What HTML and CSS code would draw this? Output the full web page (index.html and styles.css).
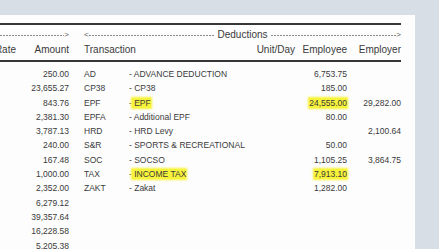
FILE: index.html
```html
<!DOCTYPE html>
<html>
<head>
<meta charset="utf-8">
<link rel="stylesheet" href="styles.css">
</head>
<body>
<div class="page">
  <div class="report">
    <div class="head">
      <div class="dashrow">
        <div class="seg-left"><span class="dash"></span><span class="arr">&gt;</span></div>
        <div class="seg-right"><span class="arr">&lt;</span><span class="dash"></span><span class="title">Deductions</span><span class="dash"></span><span class="arr">&gt;</span></div>
      </div>
      <div class="grid hdr">
        <span class="rate"><span>Rate</span></span><span class="r">Amount</span><span></span><span class="l span2">Transaction</span><span class="r">Unit/Day</span><span class="r">Employee</span><span class="r">Employer</span>
      </div>
    </div>
    <div class="body">
      <div class="grid row"><span></span><span class="r">250.00</span><span></span><span>AD</span><span>- ADVANCE DEDUCTION</span><span></span><span class="r">6,753.75</span><span></span></div>
      <div class="grid row"><span></span><span class="r">23,655.27</span><span></span><span>CP38</span><span>- CP38</span><span></span><span class="r">185.00</span><span></span></div>
      <div class="grid row"><span></span><span class="r">843.76</span><span></span><span>EPF</span><span>-<span class="hl"> EPF</span></span><span></span><span class="r"><span class="hl">24,555.00</span></span><span class="r">29,282.00</span></div>
      <div class="grid row"><span></span><span class="r">2,381.30</span><span></span><span>EPFA</span><span>- Additional EPF</span><span></span><span class="r">80.00</span><span></span></div>
      <div class="grid row"><span></span><span class="r">3,787.13</span><span></span><span>HRD</span><span>- HRD Levy</span><span></span><span></span><span class="r">2,100.64</span></div>
      <div class="grid row"><span></span><span class="r">240.00</span><span></span><span>S&amp;R</span><span>- SPORTS &amp; RECREATIONAL</span><span></span><span class="r">50.00</span><span></span></div>
      <div class="grid row"><span></span><span class="r">167.48</span><span></span><span>SOC</span><span>- SOCSO</span><span></span><span class="r">1,105.25</span><span class="r">3,864.75</span></div>
      <div class="grid row"><span></span><span class="r">1,000.00</span><span></span><span>TAX</span><span>-<span class="hl"> INCOME TAX</span></span><span></span><span class="r"><span class="hl">7,913.10</span></span><span></span></div>
      <div class="grid row"><span></span><span class="r">2,352.00</span><span></span><span>ZAKT</span><span>- Zakat</span><span></span><span class="r">1,282.00</span><span></span></div>
      <div class="grid row"><span></span><span class="r">6,279.12</span></div>
      <div class="grid row"><span></span><span class="r">39,357.64</span></div>
      <div class="grid row"><span></span><span class="r">16,228.58</span></div>
      <div class="grid row"><span></span><span class="r">5,205.38</span></div>
    </div>
  </div>
</div>
</body>
</html>
```
FILE: styles.css
```css
html, body {
  margin: 0;
  padding: 0;
  background: #d8dee6;
  height: 100%;
  overflow: hidden;
}
body {
  font-family: "Liberation Sans", Arial, sans-serif;
  color: #3a3a3a;
}
.page {
  margin-top: 15px;
  width: 415px;
  height: 240px;
  background: #fdfdfd;
  padding-top: 8px;
  box-sizing: border-box;
}
.report {
  width: 401px;
}
.head {
  border-top: 2px solid #363636;
  border-bottom: 2px solid #363636;
  padding-bottom: 2px;
}
.dashrow {
  display: flex;
  height: 14px;
  margin-top: 3px;
  font-size: 9px;
  line-height: 14px;
  color: #555;
}
.seg-left {
  width: 69px;
  display: flex;
  align-items: center;
}
.seg-right {
  margin-left: 15px;
  flex: 1;
  display: flex;
  align-items: center;
}
.dash {
  flex: 1;
  height: 1px;
  margin-top: 1px;
  background: repeating-linear-gradient(90deg, #8a8a8a 0 2px, transparent 2px 3px);
}
.arr {
  font-size: 8px;
}
.title {
  font-size: 10px;
  color: #3a3a3a;
  padding: 0 3px;
}
.grid {
  display: grid;
  grid-template-columns: 16px 53px 15px 45px 121px 45px 52px 54px;
  white-space: nowrap;
}
.hdr {
  font-size: 10px;
  height: 16px;
  line-height: 16px;
}
.rate {
  display: flex;
  justify-content: flex-end;
  min-width: 0;
}
.rate > span {
  flex: none;
}
.span2 {
  grid-column: span 2;
}
.r { text-align: right; }
.l { text-align: left; }
.body {
  padding-top: 5px;
}
.row {
  font-size: 8.5px;
  height: 14.3px;
  line-height: 14.3px;
}
.hl {
  background: #f7f23a;
  box-shadow: 0 0 2px 1px #f7f23a;
  white-space: pre;
}
```
